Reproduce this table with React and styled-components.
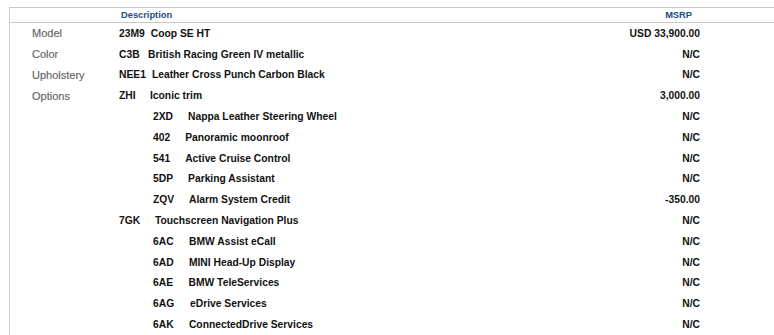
import styled, { createGlobalStyle } from "styled-components";

const Global = createGlobalStyle`
  body {
    margin: 0;
    background: #fff;
    font-family: "Liberation Sans", Arial, sans-serif;
  }
`;

const Page = styled.div`
  padding: 7px 0 0 9px;
  height: 328px;
  overflow: hidden;
`;

const Sheet = styled.div`
  border-top: 1px solid #c9c9c9;
  border-left: 1px solid #d2d2d2;
  min-height: 330px;
`;

const Row = styled.div`
  display: grid;
  grid-template-columns: 109px 1fr 160px 74px;
  align-items: center;
  height: 20.8px;
`;

const HeaderRow = styled(Row)`
  height: 14px;
  border-bottom: 1px solid #c9c9c9;
  font-size: 9.3px;
  font-weight: bold;
  color: #1d4f80;
`;

const HeadDesc = styled.div`
  padding-left: 2px;
`;

const HeadPrice = styled.div`
  text-align: right;
  padding-right: 8px;
`;

const Label = styled.div`
  padding-left: 22px;
  font-size: 11px;
  color: #646464;
  -webkit-text-stroke: 0.15px #646464;
`;

const Desc = styled.div`
  display: flex;
  padding-left: ${(p) => p.indent || 0}px;
  font-size: 10.3px;
  font-weight: bold;
  color: #111;
  white-space: nowrap;
`;

const Code = styled.span`
  margin-right: ${(p) => p.gap}px;
`;

const Price = styled.div`
  text-align: right;
  font-size: 10.3px;
  font-weight: bold;
  color: #111;
`;

const rows = [
  { label: "Model", code: "23M9", text: "Coop SE HT", gap: 6, price: "USD 33,900.00" },
  { label: "Color", code: "C3B", text: "British Racing Green IV metallic", gap: 8.5, price: "N/C" },
  { label: "Upholstery", code: "NEE1", text: "Leather Cross Punch Carbon Black", gap: 6, price: "N/C" },
  { label: "Options", code: "ZHI", text: "Iconic trim", gap: 14.4, price: "3,000.00" },
  { code: "2XD", text: "Nappa Leather Steering Wheel", gap: 15, indent: 34, price: "N/C" },
  { code: "402", text: "Panoramic moonroof", gap: 15, indent: 34, price: "N/C" },
  { code: "541", text: "Active Cruise Control", gap: 15, indent: 34, price: "N/C" },
  { code: "5DP", text: "Parking Assistant", gap: 15, indent: 34, price: "N/C" },
  { code: "ZQV", text: "Alarm System Credit", gap: 14.8, indent: 34, price: "-350.00" },
  { code: "7GK", text: "Touchscreen Navigation Plus", gap: 14.8, price: "N/C" },
  { code: "6AC", text: "BMW Assist eCall", gap: 15.5, indent: 34, price: "N/C" },
  { code: "6AD", text: "MINI Head-Up Display", gap: 15.3, indent: 34, price: "N/C" },
  { code: "6AE", text: "BMW TeleServices", gap: 15.5, indent: 34, price: "N/C" },
  { code: "6AG", text: "eDrive Services", gap: 15.8, indent: 34, price: "N/C" },
  { code: "6AK", text: "ConnectedDrive Services", gap: 15.3, indent: 34, price: "N/C" },
];

export default function App() {
  return (
    <Page>
      <Global />
      <Sheet>
        <HeaderRow>
          <div />
          <HeadDesc>Description</HeadDesc>
          <HeadPrice>MSRP</HeadPrice>
          <div />
        </HeaderRow>
        {rows.map((r, i) => (
          <Row key={i}>
            <Label>{r.label || ""}</Label>
            <Desc indent={r.indent}>
              <Code gap={r.gap}>{r.code}</Code>
              <span>{r.text}</span>
            </Desc>
            <Price>{r.price}</Price>
            <div />
          </Row>
        ))}
      </Sheet>
    </Page>
  );
}
